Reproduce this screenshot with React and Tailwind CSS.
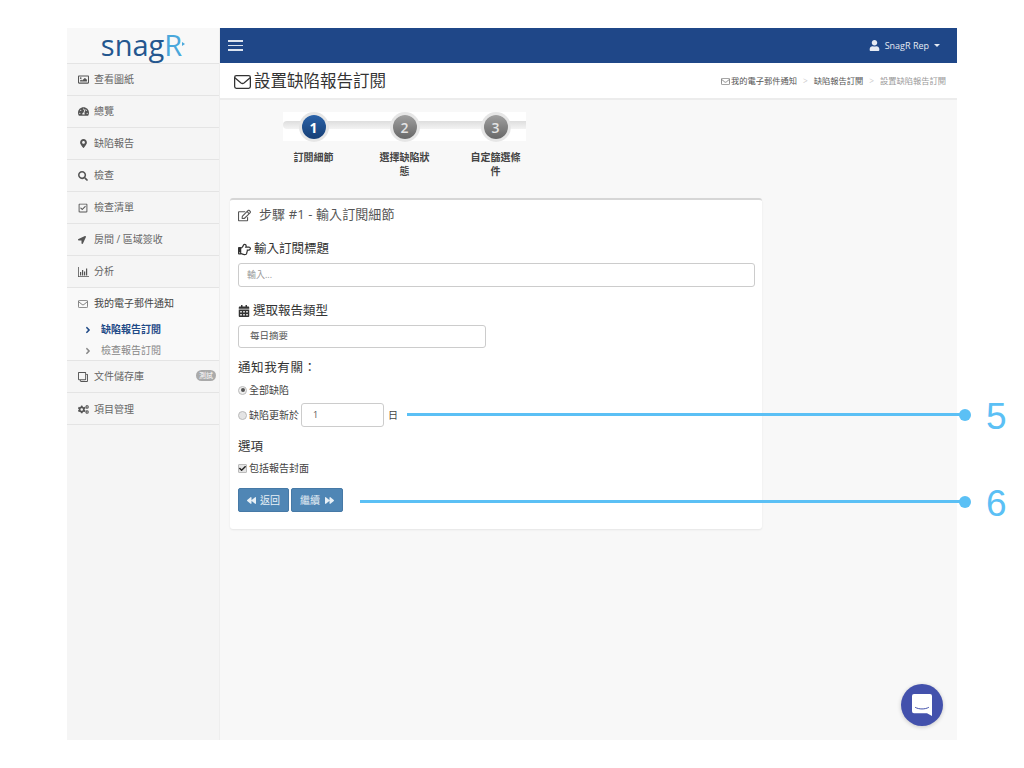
import { FaRegImage, FaTachometerAlt, FaMapMarkerAlt, FaSearch, FaRegCheckSquare, FaLocationArrow, FaRegClone, FaCogs, FaRegEdit, FaRegHandPointRight, FaCalendarAlt, FaBackward, FaForward, FaUser, FaAngleRight, FaCheck } from 'react-icons/fa'

const FONT = { fontFamily: '"Open Sans", "Noto Sans CJK TC", sans-serif' }

function BarIcon() {
  return (
    <svg width="11" height="10" viewBox="0 0 11 10" fill="currentColor">
      <path d="M0 0h.8v9.2H11V10H0zM2 5h1.2v3.6H2zM4 3h1.2v5.6H4zM6 4.4h1.2v4.2H6zM8 1.6h1.2v7H8z" />
    </svg>
  )
}

// thin outline envelope, the solid package one is too heavy
function Envelope({ w, h }) {
  return (
    <svg width={w} height={h} viewBox="0 0 16 13" fill="none" stroke="currentColor" strokeWidth="1.2">
      <rect x="0.6" y="0.6" width="14.8" height="11.8" rx="1.6" />
      <path d="M0.8 2.6 L6.6 7.4 Q8 8.4 9.4 7.4 L15.2 2.6" />
    </svg>
  )
}

const MENU_TOP = [
  { icon: <FaRegImage className="text-[11px]" />, label: '查看圖紙' },
  { icon: <FaTachometerAlt className="text-[11px]" />, label: '總覽' },
  { icon: <FaMapMarkerAlt className="text-[9px] ml-[1px]" />, label: '缺陷報告' },
  { icon: <FaSearch className="text-[10px]" />, label: '檢查' },
  { icon: <FaRegCheckSquare className="text-[10px]" />, label: '檢查清單' },
  { icon: <FaLocationArrow className="text-[8px]" />, label: '房間 / 區域簽收' },
  { icon: <BarIcon />, label: '分析' },
]

function MenuItem({ icon, label, badge, lower }) {
  return (
    <div className={`h-8 flex items-center pl-[11px] border-b border-[#e4e4e4] text-[10px] text-[#666] relative ${lower ? 'pt-[1px]' : ''}`}>
      <span className="w-[16px] text-[#555] flex items-center">{icon}</span>
      <span>{label}</span>
      {badge && <span className="absolute right-[3px] top-[9px] h-[11px] px-[3px] rounded-full bg-[#aaa] text-white text-[7px] leading-[11px]">{badge}</span>}
    </div>
  )
}

function Sidebar() {
  return (
    <div className="w-[153px] shrink-0 bg-[#f5f5f5] border-r border-[#eee]">
      <div className="h-[36px] border-b border-[#e4e4e4] bg-[#f8f8f8] flex items-center justify-center text-[29px] leading-none relative" style={{ fontFamily: '"Open Sans", sans-serif' }}>
        <span className="text-[#24578f] -mt-[3px]">snag</span>
        <span className="text-[#4aa8dc] -mt-[3px]">R</span>
        <span className="w-0 h-0 -mt-[3px] border-y-[2px] border-y-transparent border-l-[3px] border-l-[#4aa8dc]"></span>
      </div>
      {MENU_TOP.map(m => <MenuItem key={m.label} icon={m.icon} label={m.label} />)}
      <div className="h-[73px] bg-[#f9f9f9] border-b border-[#e4e4e4]">
        <div className="h-[31px] flex items-center pl-[11px] text-[10px] text-[#444]">
          <span className="w-[16px] flex items-center text-[#555]"><Envelope w={10} h={8} /></span>
          <span>我的電子郵件通知</span>
        </div>
        <div className="h-[21px] flex items-center pl-[16px] text-[10px] font-bold text-[#1f4a87]">
          <span className="w-[18px] flex items-center"><FaAngleRight /></span>缺陷報告訂閱
        </div>
        <div className="h-[21px] flex items-center pl-[16px] text-[10px] text-[#888]">
          <span className="w-[18px] flex items-center"><FaAngleRight /></span>檢查報告訂閱
        </div>
      </div>
      <MenuItem icon={<FaRegClone className="text-[10px] -scale-x-100" />} label="文件儲存庫" badge="測試" />
      <MenuItem icon={<FaCogs className="text-[11px]" />} label="項目管理" lower />
    </div>
  )
}

function Step({ n, active, label }) {
  return (
    <div className="w-[91px] flex flex-col items-center shrink-0">
      <div className={`w-[24px] h-[24px] m-[1px] rounded-full flex items-center justify-center text-[14px] ring-[3px] ring-[#e6e6e6] ${active ? 'font-bold text-white bg-gradient-to-b from-[#2a62a8] to-[#173f76]' : 'font-semibold text-[#e4e4e4] bg-gradient-to-b from-[#a0a0a0] to-[#686868]'}`}>{n}</div>
      <div className="w-[56px] mt-[10px] text-center text-[10px] leading-[14px] font-semibold text-[#444]">{label}</div>
    </div>
  )
}

function Wizard() {
  return (
    <div className="relative ml-[48px] w-[273px] h-[82px] mt-[12px]">
      {/* band behind the numbered circles */}
      <div className="absolute left-[15px] top-0 w-[243px] h-[29px] bg-white">
        <div className="h-[8px] mt-[9px] rounded-l-full bg-gradient-to-b from-[#dedede] to-[#f3f3f3]"></div>
      </div>
      <div className="relative flex pt-[2px]">
        <Step n="1" active label="訂閱細節" />
        <Step n="2" label="選擇缺陷狀態" />
        <Step n="3" label="自定篩選條件" />
      </div>
    </div>
  )
}

function FormCard() {
  return (
    <div className="ml-[10px] mt-[4px] w-[532px] h-[331px] bg-white border-t-2 border-[#d6d6d6] rounded-[3px] shadow-[0_1px_2px_rgba(0,0,0,0.08)] px-[8px] text-[#444]">
      <div className="mt-[5px] h-[20px] flex items-center text-[13px] tracking-[0.1px] text-[#555]">
        <FaRegEdit className="text-[13px] mr-[8px]" />步驟 #1 - 輸入訂閱細節
      </div>
      <div className="mt-[14px] h-[20px] flex items-center text-[12.5px] text-[#333]">
        <FaRegHandPointRight className="text-[13px] mr-[3px]" />輸入訂閱標題
      </div>
      <div className="mt-[4px] h-[24px] w-[517px] border border-[#ccc] rounded-[3px] flex items-center px-[8px] text-[9px] text-[#999]">輸入...</div>
      <div className="mt-[14px] h-[20px] flex items-center text-[12.5px] text-[#333]">
        <FaCalendarAlt className="text-[12px] mr-[3px]" />選取報告類型
      </div>
      <div className="mt-[4px] h-[23px] w-[248px] border border-[#ccc] rounded-[3px] flex items-center px-[11px] text-[9.5px] text-[#555]">每日摘要</div>
      <div className="mt-[10px] h-[20px] flex items-center text-[12.5px] text-[#333] tracking-[0.6px]">通知我有關：</div>
      <div className="mt-[2px] h-[20px] flex items-center text-[10px]">
        <span className="w-[9px] h-[9px] rounded-full border border-[#bbb] bg-[#eee] flex items-center justify-center mr-[2px]"><span className="w-[4px] h-[4px] rounded-full bg-[#555]"></span></span>全部缺陷
      </div>
      <div className="mt-[3px] h-[24px] flex items-center text-[10px]">
        <span className="w-[9px] h-[9px] rounded-full border border-[#bbb] bg-[#e4e4e4] mr-[2px]"></span>缺陷更新於
        <span className="ml-[2px] w-[83px] h-[24px] border border-[#ccc] rounded-[3px] flex items-center pl-[11px] text-[9px] text-[#555]">1</span>
        <span className="ml-[4px]">日</span>
      </div>
      <div className="mt-[10px] h-[20px] flex items-center text-[12.5px] text-[#333]">選項</div>
      <div className="mt-[1px] h-[20px] flex items-center text-[10px]">
        <span className="w-[9px] h-[9px] rounded-[1px] border border-[#bbb] bg-[#e4e4e4] flex items-center justify-center mr-[2px] text-[#222]"><FaCheck className="text-[7px]" /></span>包括報告封面
      </div>
      <div className="mt-[10px] flex gap-[2px]">
        <div className="w-[51px] h-[24px] rounded-[2px] bg-[#4f86b5] border border-[#4679a6] text-[#e8f0f6] text-[10px] flex items-center justify-center">
          <FaBackward className="text-[9px] mr-[4px]" />返回
        </div>
        <div className="w-[52px] h-[24px] rounded-[2px] bg-[#4f86b5] border border-[#4679a6] text-[#e8f0f6] text-[10px] flex items-center justify-center">
          繼續<FaForward className="text-[9px] ml-[5px]" />
        </div>
      </div>
    </div>
  )
}

function Callout({ top, left, num }) {
  return (
    <div className="absolute flex items-center" style={{ top, left, width: 1008 - left }}>
      <div className="flex-1 h-[3px] bg-[#5bc0f5]"></div>
      <div className="w-[12px] h-[12px] rounded-full bg-[#5bc0f5] -ml-[1px]"></div>
      <div className="w-[37px] pl-[15px] text-[37px] leading-none font-light text-[#5bc0f5] relative top-[2px]" style={{ fontFamily: '"Liberation Sans", sans-serif' }}>{num}</div>
    </div>
  )
}

export default function App() {
  return (
    <div className="relative w-[1024px] h-[768px] bg-white overflow-hidden" style={FONT}>
      <div className="pt-[28px] pl-[67px]">
        <div className="w-[890px] h-[712px] flex bg-[#f8f8f8]">
          <Sidebar />
          <div className="flex-1 flex flex-col min-w-0">
            <div className="h-[35px] bg-[#1f4788] flex items-center justify-between pl-[8px] pr-[17px] text-white shrink-0">
              <div className="w-[15px] flex flex-col gap-[3px]">
                <span className="h-[1.5px] bg-[#dce4f0]"></span>
                <span className="h-[1.5px] bg-[#dce4f0]"></span>
                <span className="h-[1.5px] bg-[#dce4f0]"></span>
              </div>
              <div className="flex items-center text-[9px] text-[#e6ebf3]">
                <FaUser className="text-[11px] mr-[5px]" />SnagR Rep
                <span className="ml-[5px] w-0 h-0 border-x-[3px] border-x-transparent border-t-[3px] border-t-[#e6ebf3]"></span>
              </div>
            </div>
            <div className="h-[37px] bg-white border-b-2 border-[#ececec] flex items-center justify-between pl-[14px] pr-[11px] pt-[2px] shrink-0">
              <div className="flex items-center text-[16.5px] text-[#333]">
                <span className="mr-[3px]"><Envelope w={17} h={14} /></span>設置缺陷報告訂閱
              </div>
              <div className="flex items-center text-[8.25px] text-[#555]">
                <span className="mr-[1px]"><Envelope w={9} h={7} /></span>我的電子郵件通知
                <span className="mx-[6px] text-[#ccc]">&gt;</span>缺陷報告訂閱
                <span className="mx-[6px] text-[#ccc]">&gt;</span><span className="text-[#999]">設置缺陷報告訂閱</span>
              </div>
            </div>
            <Wizard />
            <FormCard />
          </div>
        </div>
      </div>

      <Callout top={396} left={407} num="5" />
      <Callout top={483} left={360} num="6" />

      {/* chat launcher */}
      <div className="absolute left-[901px] top-[684px] w-[42px] h-[42px] rounded-full bg-[#4351ac] flex items-center justify-center shadow-[0_1px_4px_rgba(0,0,0,0.2)]">
        <svg width="20" height="22" viewBox="0 0 20 22">
          <path d="M2 0h16a2 2 0 0 1 2 2v20l-5-2.8H2a2 2 0 0 1-2-2V2a2 2 0 0 1 2-2z" fill="#fff" />
          <path d="M3.5 13.5c3.5 2 9.5 2 13 0" fill="none" stroke="#4351ac" strokeWidth="1" strokeLinecap="round" />
        </svg>
      </div>
    </div>
  )
}
